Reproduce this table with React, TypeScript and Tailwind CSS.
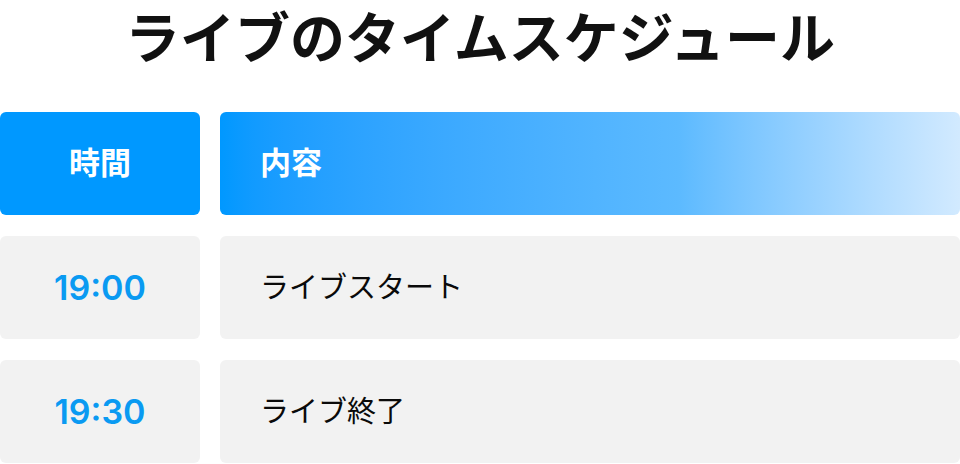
const rows = [
  { time: '19:00', label: 'ライブスタート' },
  { time: '19:30', label: 'ライブ終了' },
];

const font = { fontFamily: 'Inter, "Noto Sans CJK JP", sans-serif' };

export default function App() {
  return (
    <div className="w-[960px] h-[464px] bg-white overflow-hidden" style={font}>
      <h1 className="h-[112px] text-center text-[55px] font-bold leading-[76px] text-[#111]">
        ライブのタイムスケジュール
      </h1>
      <div className="flex flex-col gap-[21px]">
        <div className="flex gap-5 h-[103px]">
          <div className="w-[200px] rounded-[6px] bg-[#0098ff] flex items-center justify-center text-white text-[31px] font-bold">
            時間
          </div>
          <div className="flex-1 rounded-[6px] bg-gradient-to-r from-[#0098ff] via-[#5cbaff] via-[62%] to-[#d2eaff] flex items-center pl-[40px] text-white text-[31px] font-bold">
            内容
          </div>
        </div>
        {rows.map((r) => (
          <div key={r.time} className="flex gap-5 h-[103px]">
            <div className="w-[200px] rounded-[6px] bg-[#f2f2f2] flex items-center justify-center text-[#0a9af2] text-[34px] font-semibold">
              {r.time}
            </div>
            <div className="flex-1 rounded-[6px] bg-[#f2f2f2] flex items-center pl-[40px] text-[#0a0a0a] text-[29px]">
              {r.label}
            </div>
          </div>
        ))}
      </div>
    </div>
  );
}
